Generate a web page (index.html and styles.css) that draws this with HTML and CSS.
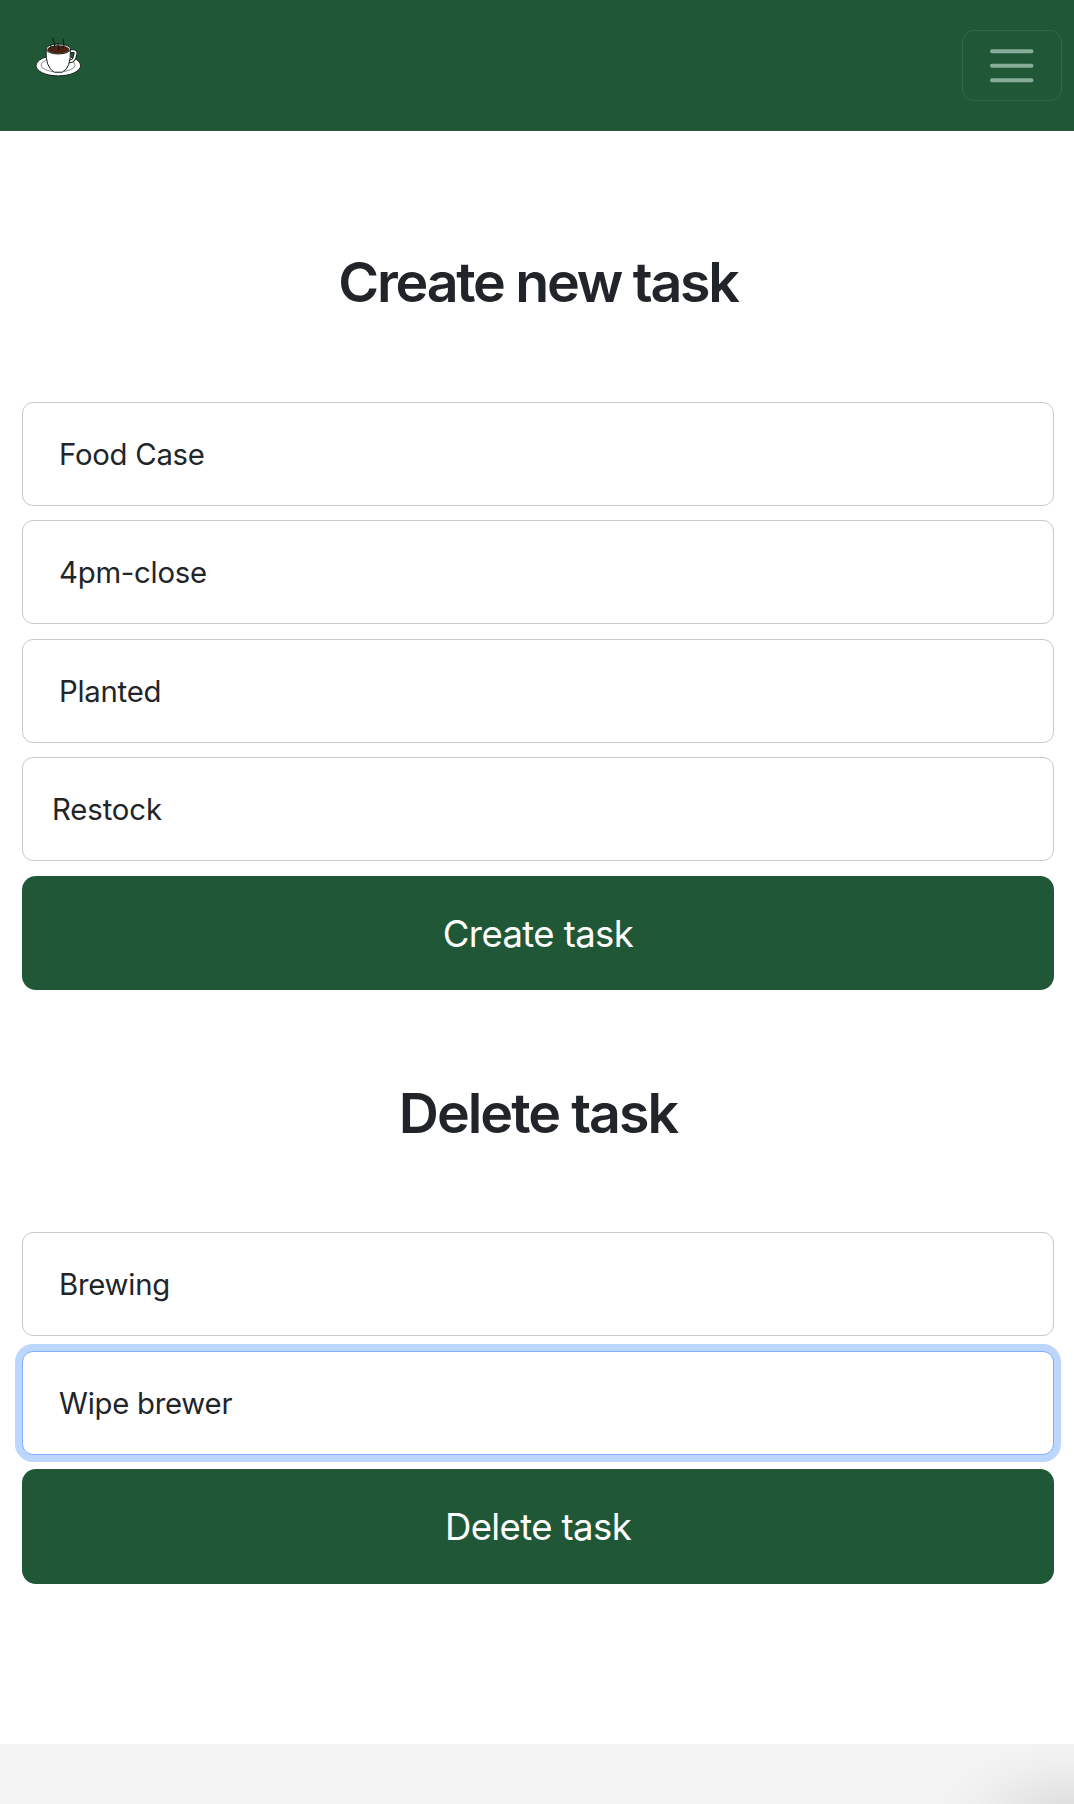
FILE: index.html
```html
<!DOCTYPE html>
<html lang="en">
<head>
<meta charset="utf-8">
<title>Tasks</title>
<link rel="stylesheet" href="styles.css">
</head>
<body>
<header class="navbar">
  <a class="brand" href="#" aria-label="Home">
    <svg class="cup" viewBox="0 0 48 44">
      <g stroke="#15201a" stroke-width="1">
        <ellipse cx="23.3" cy="28.6" rx="22.3" ry="10.3" fill="#fff"/>
        <ellipse cx="23" cy="28" rx="17" ry="7" fill="#fff" stroke-width=".5"/>
        <path d="M34 14.2h4.500q2.500 0 2 2.500l-1 4q-.8 3-4 3.400l-3.500.4" fill="none" stroke-width="3.600"/>
        <path d="M34 14.200h4.500q2.500 0 2 2.500l-1 4q-.8 3-4 3.400l-3.500.4" fill="none" stroke="#fff" stroke-width="1.800"/>
        <path d="M11.200 12q-1.200 18 8 23.200h8q9-4 8.200-23.200z" fill="#fff"/>
        <ellipse cx="23.300" cy="12" rx="12.200" ry="5" fill="#fff"/>
        <ellipse cx="23.300" cy="12.500" rx="10.800" ry="3.900" fill="#4e200f" stroke-width=".5"/>
        <path d="M18 1q-1 2 .8 4t.3 5M29 2q-1.500 2-.3 4t-1 5M23.500 6q-1 2 0 4t-.3 3.500M15.500 8q1 1.500 0 3.500" fill="none" stroke-width="1.200"/>
      </g>
    </svg>
  </a>
  <button class="toggler" aria-label="Menu">
    <svg viewBox="0 0 44 34"><path d="M2 2.200h39.500M2 16.700h39.500M2 31.300h39.500"/></svg>
  </button>
</header>
<main class="content">
  <form class="task-form">
    <h1 class="title title-create">Create new task</h1>
    <select class="field"><option>Food Case</option></select>
    <select class="field"><option>4pm-close</option></select>
    <select class="field"><option>Planted</option></select>
    <input class="field field-text" value="Restock">
    <button class="submit" type="button">Create task</button>
  </form>
  <form class="task-form task-form-delete">
    <h1 class="title title-delete">Delete task</h1>
    <select class="field"><option>Brewing</option></select>
    <select class="field field-focus"><option>Wipe brewer</option></select>
    <button class="submit" type="button">Delete task</button>
  </form>
</main>
<footer class="footer"></footer>
</body>
</html>
```
FILE: styles.css
```css
* { box-sizing: border-box; }
body {
  margin: 0;
  height: 1804px;
  display: flex;
  flex-direction: column;
  overflow: hidden;
  background: #fff;
  color: #212529;
  font-family: Inter, sans-serif;
}
.navbar {
  height: 131px;
  flex: none;
  display: flex;
  justify-content: space-between;
  align-items: flex-start;
  padding: 30px 12px 0 35px;
  background: #205837;
}
.brand { display: block; margin-top: 7px; }
.cup { display: block; width: 48px; height: 44px; }
.toggler {
  width: 100px;
  height: 71px;
  display: flex;
  align-items: center;
  justify-content: center;
  padding: 0;
  background: none;
  border: 1px solid #2d6847;
  border-radius: 12px;
}
.toggler svg {
  width: 44px;
  height: 34px;
  fill: none;
  stroke: #86ad99;
  stroke-width: 4;
  stroke-linecap: round;
}
.content { flex: 1; padding: 111px 20px 0 22px; }
.task-form {
  display: flex;
  flex-direction: column;
  gap: 14.400px;
}
.task-form-delete {
  margin-top: 82.400px;
  gap: 15px;
}
.title {
  margin: 0 0 65.600px;
  height: 80px;
  line-height: 80px;
  text-align: center;
  font-size: 55.500px;
  font-weight: 580;
}
.title-create { letter-spacing: -2.250px; }
.title-delete {
  padding-top: 1px;
  margin-bottom: 65px;
  letter-spacing: -1.950px;
}
.field {
  appearance: none;
  width: 100%;
  height: 104px;
  padding: 1px 36px 0;
  font: 400 29.300px Inter, sans-serif;
  letter-spacing: -.24px;
  color: #212529;
  background: #fff;
  border: 1px solid #c5cad0;
  border-radius: 11px;
  outline: 0;
}
.field-text { padding: 0 29px; letter-spacing: -.1px; }
.field-focus {
  border-color: #81b0f8;
  box-shadow: 0 0 0 7px #bdd6fd;
}
.submit {
  height: 114px;
  padding: 2px 0 0;
  border: 0;
  border-radius: 14px;
  background: #205837;
  color: #fff;
  font: 400 36.500px Inter, sans-serif;
  letter-spacing: -.6px;
}
.task-form-delete .submit {
  height: 115px;
  margin-top: -1px;
}
.footer {
  flex: none;
  height: 60px;
  background: radial-gradient(ellipse 135px 75px at 100% 125%, #d9d9d9, #e4e4e4 35%, #efefef 75%, #f3f3f3) #f3f3f3;
}
```
